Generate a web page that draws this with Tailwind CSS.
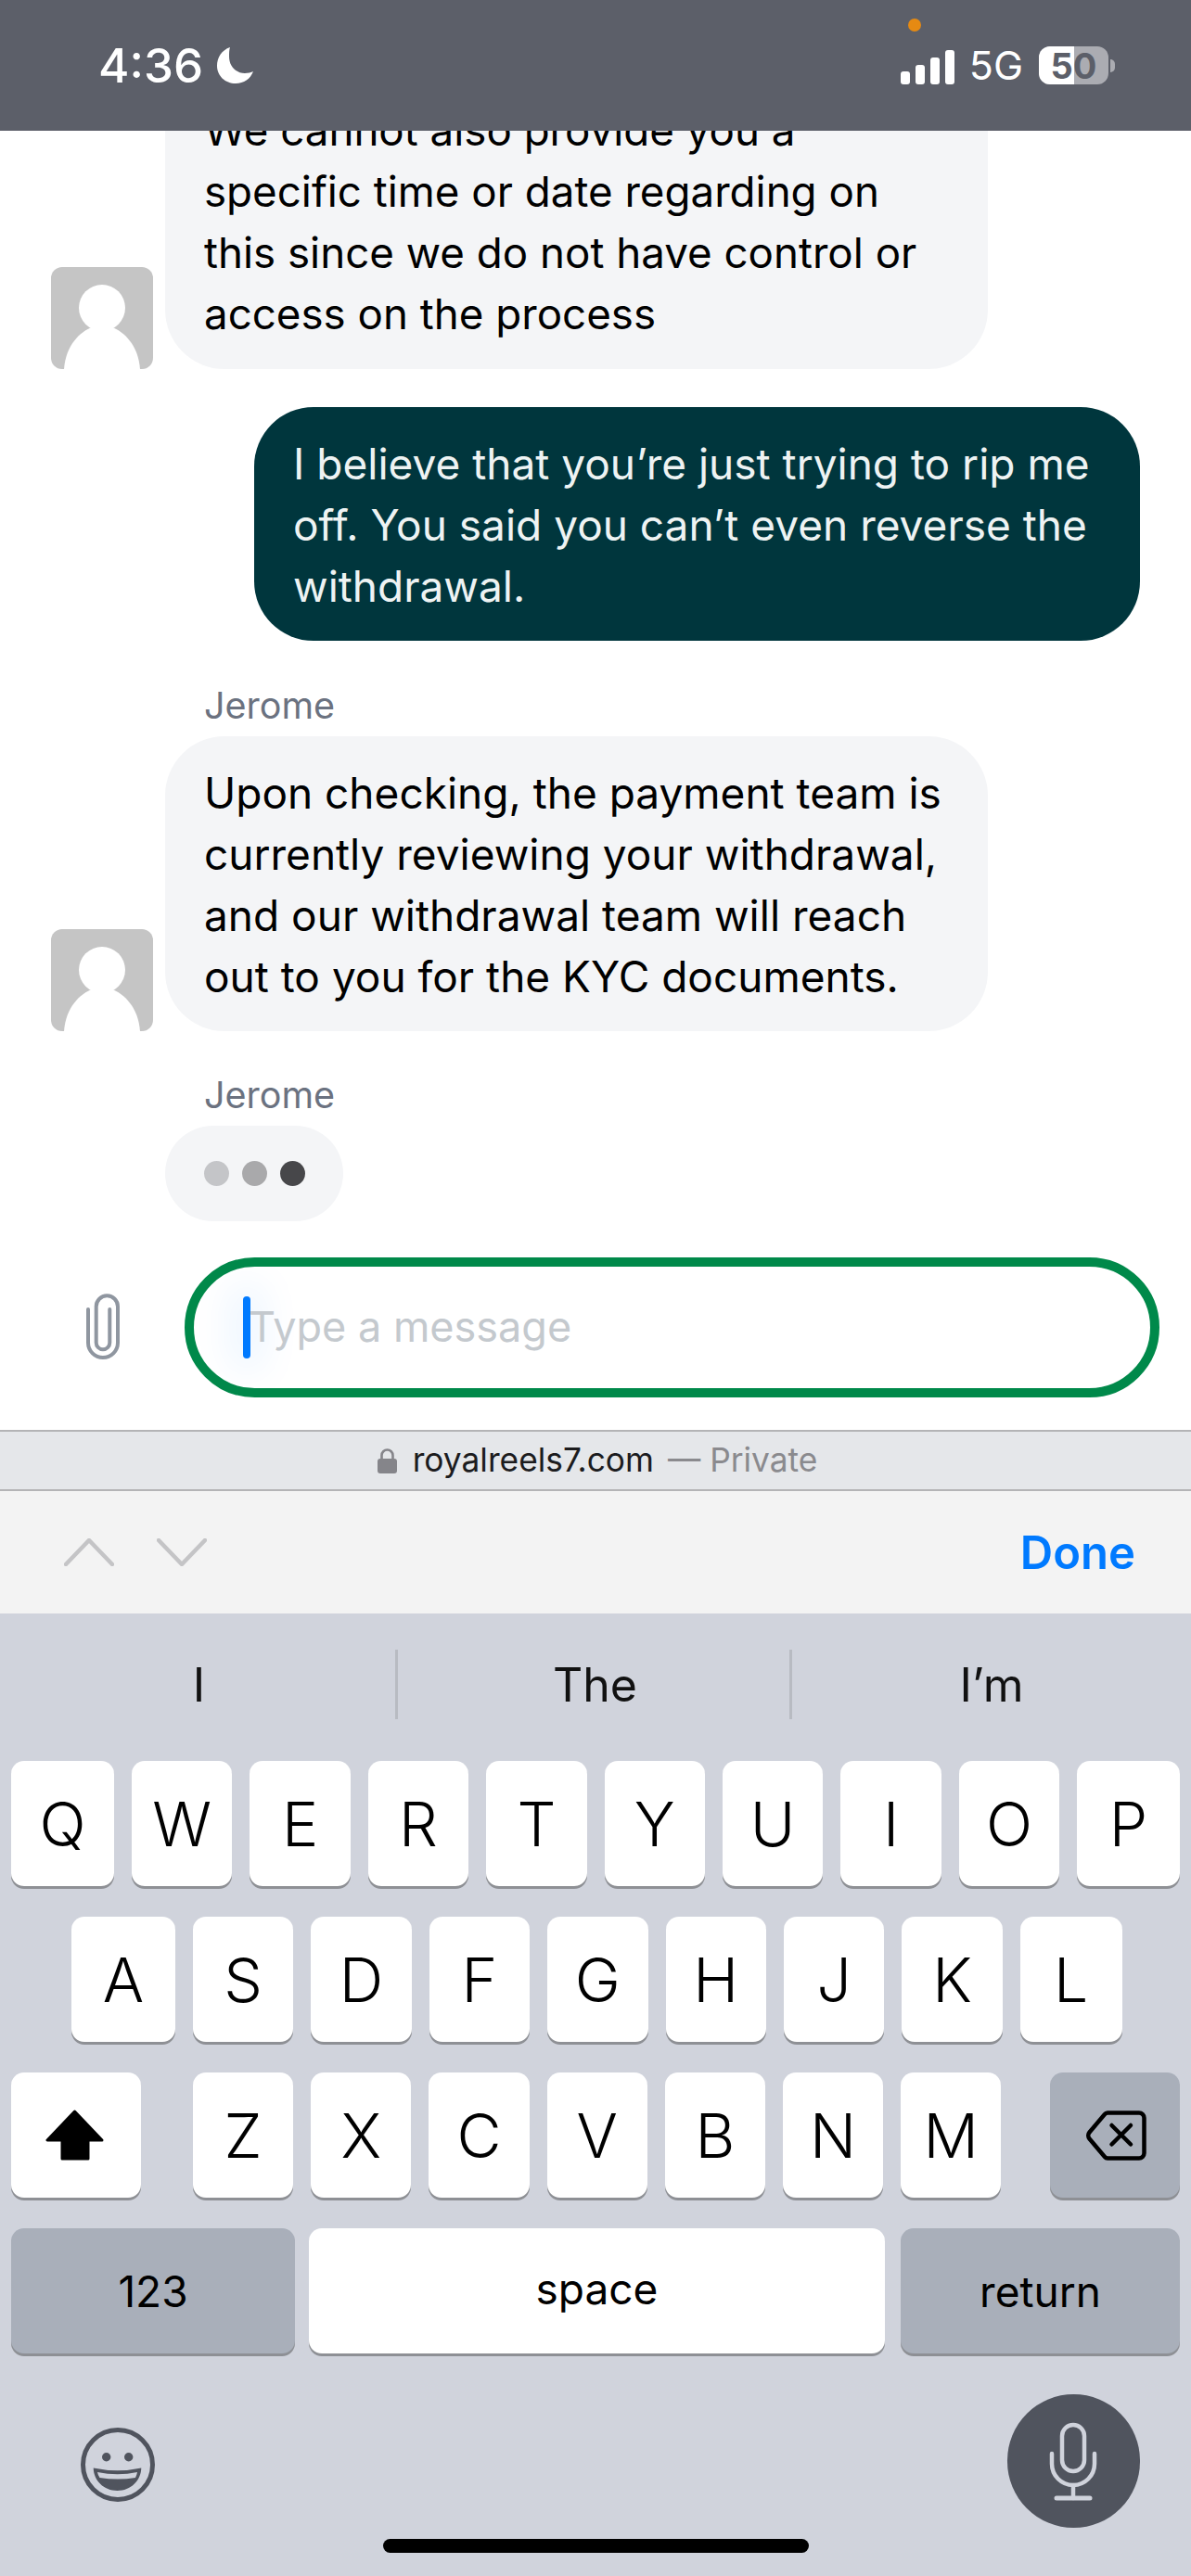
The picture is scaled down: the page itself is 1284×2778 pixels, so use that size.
<!DOCTYPE html>
<html lang="en">
<head>
    <meta charset="UTF-8">
    <meta name="viewport" content="width=device-width, initial-scale=1.0">
    <title>Chat</title>
    <script src="https://cdn.jsdelivr.net/npm/@tailwindcss/browser@4"></script>
</head>
<body class="bg-white font-['Inter',sans-serif]">
    <div class="w-[1284px] h-[2778px] flex flex-col overflow-hidden">
        <!-- status bar -->
        <div class="relative z-10 h-[141px] shrink-0 bg-[#5c5f69] flex items-center justify-between pl-[106px] pr-[82px] text-white">
            <div class="flex items-center gap-[15px]">
                <span class="text-[51px] leading-none font-medium">4:36</span>
                <svg width="39" height="39" viewBox="0 0 39 39" fill="#fff"><path d="M14 0C5 3 0 11 0 20C0 31 9 39 20 39C29 39 36 34 39 26C37 27 33 28 30 28C20 28 13 20 13 10C13 6 13 3 14 0Z"/></svg>
            </div>
            <div class="flex items-center">
                <div class="flex items-end gap-[6px] h-[37px] mt-[4px]">
                    <div class="w-[10px] h-[14px] bg-white rounded-[3px]"></div>
                    <div class="w-[10px] h-[21px] bg-white rounded-[3px]"></div>
                    <div class="w-[10px] h-[29px] bg-white rounded-[3px]"></div>
                    <div class="w-[10px] h-[37px] bg-white rounded-[3px]"></div>
                </div>
                <span class="ml-[16px] text-[43px] leading-none">5G</span>
                <div class="relative ml-[17px] w-[75px] h-[41px] rounded-[12px] bg-[#abacb2] flex">
                    <div class="w-[38px] h-full bg-white rounded-l-[12px]"></div>
                    <span class="absolute inset-0 flex items-center justify-center text-[38px] leading-none font-bold text-[#5c5f69]">50</span>
                </div>
                <div class="ml-[2px] w-[5px] h-[14px] bg-[#abacb2] rounded-r-full"></div>
            </div>
            <div class="absolute left-[979px] top-[20px] w-[14px] h-[14px] rounded-full bg-[#e68a12]"></div>
        </div>

        <!-- chat -->
        <div class="h-[1401px] shrink-0 overflow-hidden flex flex-col text-[46px] leading-[66px] text-black">
            <div class="flex items-end -mt-[61px] ml-[55px] gap-[13px]">
                <svg class="shrink-0" width="110" height="110" viewBox="0 0 110 110"><rect width="110" height="110" rx="12" fill="#c5c5c5"/><circle cx="55" cy="44" r="25" fill="#fff"/><path d="M14 110C16 85 30 70 46 64L64 64C80 70 94 85 96 110Z" fill="#fff"/></svg>
                <div class="w-[887px] bg-[#f4f5f7] rounded-[64px] px-[42px] pt-[28px] pb-[26px] text-[45.7px]">We cannot also provide you a<br>specific time or date regarding on<br>this since we do not have control or<br>access on the process</div>
            </div>
            <div class="mt-[41px] ml-[274px] w-[955px] bg-[#00363d] text-[#eef3f3] rounded-[64px] px-[42px] pt-[28px] pb-[26px]">I believe that you’re just trying to rip me<br>off. You said you can’t even reverse the<br>withdrawal.</div>
            <div class="mt-[47px] ml-[220px] mb-[10px] text-[39.5px] leading-[46px] text-[#6b7280]">Jerome</div>
            <div class="flex items-end ml-[55px] gap-[13px]">
                <svg class="shrink-0" width="110" height="110" viewBox="0 0 110 110"><rect width="110" height="110" rx="12" fill="#c5c5c5"/><circle cx="55" cy="44" r="25" fill="#fff"/><path d="M14 110C16 85 30 70 46 64L64 64C80 70 94 85 96 110Z" fill="#fff"/></svg>
                <div class="w-[887px] bg-[#f4f5f7] rounded-[64px] px-[42px] pt-[28px] pb-[26px]">Upon checking, the payment team is<br>currently reviewing your withdrawal,<br>and our withdrawal team will reach<br>out to you for the KYC documents.</div>
            </div>
            <div class="mt-[46px] ml-[220px] mb-[10px] text-[39.5px] leading-[46px] text-[#6b7280]">Jerome</div>
            <div class="ml-[178px] w-[192px] h-[103px] bg-[#f4f5f7] rounded-[52px] pl-[42px] flex items-center gap-[14px]">
                <div class="w-[27px] h-[27px] rounded-full bg-[#c4c5c8]"></div>
                <div class="w-[27px] h-[27px] rounded-full bg-[#a9a9ab]"></div>
                <div class="w-[27px] h-[27px] rounded-full bg-[#47474a]"></div>
            </div>
            <div class="mt-[39px] flex items-center">
                <svg class="ml-[93px] shrink-0" width="36" height="73" viewBox="0 0 36 73" fill="none" stroke="#8f96a0" stroke-width="4" stroke-linecap="round"><path d="M2 17V53A16 16 0 0 0 34 53V14A11.65 11.65 0 0 0 10.7 14V53A7.3 7.3 0 0 0 25.3 53V17"/></svg>
                <div class="ml-[70px] w-[1051px] h-[151px] rounded-full border-[10px] border-[#00894a] flex items-center pl-[53px] text-[45px] text-[#c4c9ce]">
                    <div class="w-[8px] h-[67px] rounded-full bg-[#007aff] shadow-[0_0_40px_14px_rgba(0,122,255,0.08)]"></div>
                    <span class="-ml-[2px] -mt-[2px]">Type a message</span>
                </div>
            </div>
        </div>

        <!-- address bar -->
        <div class="h-[66px] shrink-0 bg-[#e5e7ea] border-y-2 border-[#b4b4b6] flex items-center justify-center pl-[4px] text-[35.3px] leading-none">
            <svg width="21" height="27" viewBox="0 0 21 27" fill="#85858a"><rect y="11" width="21" height="16" rx="3"/><path d="M4.5 12V7.5a6 6 0 0 1 12 0V12" fill="none" stroke="#85858a" stroke-width="2.6"/></svg>
            <span class="ml-[17px] text-[#1c1c1e]">royalreels7.com</span>
            <span class="ml-[15px] text-[#8a8a8e]">— Private</span>
        </div>

        <!-- toolbar -->
        <div class="h-[132px] shrink-0 bg-[#f3f3f3] flex items-center pl-[69px] pr-[60px]">
            <svg width="54" height="30" viewBox="0 0 54 30" fill="none" stroke="#c4c4c6" stroke-width="4.5" stroke-linecap="round" stroke-linejoin="round"><path d="M2 28L27 2L52 28"/></svg>
            <svg class="ml-[46px]" width="54" height="30" viewBox="0 0 54 30" fill="none" stroke="#c4c4c6" stroke-width="4.5" stroke-linecap="round" stroke-linejoin="round"><path d="M2 2L27 28L52 2"/></svg>
            <span class="ml-auto text-[49px] leading-none font-semibold text-[#007aff]">Done</span>
        </div>

        <!-- keyboard -->
        <div class="flex-1 bg-[#d0d3dc] flex flex-col text-black">
            <div class="h-[159px] shrink-0 pt-[39px]">
                <div class="h-[75px] flex text-[50px] leading-none text-[#111]">
                    <div class="w-[426px] flex items-center justify-center pl-[3px]">I</div>
                    <div class="w-[428px] border-x-[3px] border-[#b8bbc2] flex items-center justify-center pl-[3px]">The</div>
                    <div class="w-[430px] flex items-center justify-center">I’m</div>
                </div>
            </div>
            <div class="flex flex-col gap-[33px] text-[66px] leading-none font-[350]">
                <div class="flex pl-[12px] pr-[12px] gap-[19px]">
                    <div class="w-[111px] h-[135px] bg-white rounded-[14px] shadow-[0_3px_0_#8e9095] flex items-center justify-center">Q</div>
                    <div class="w-[108.4px] h-[135px] bg-white rounded-[14px] shadow-[0_3px_0_#8e9095] flex items-center justify-center">W</div>
                    <div class="w-[108.4px] h-[135px] bg-white rounded-[14px] shadow-[0_3px_0_#8e9095] flex items-center justify-center">E</div>
                    <div class="w-[108.4px] h-[135px] bg-white rounded-[14px] shadow-[0_3px_0_#8e9095] flex items-center justify-center">R</div>
                    <div class="w-[108.4px] h-[135px] bg-white rounded-[14px] shadow-[0_3px_0_#8e9095] flex items-center justify-center">T</div>
                    <div class="w-[108.4px] h-[135px] bg-white rounded-[14px] shadow-[0_3px_0_#8e9095] flex items-center justify-center">Y</div>
                    <div class="w-[108.4px] h-[135px] bg-white rounded-[14px] shadow-[0_3px_0_#8e9095] flex items-center justify-center">U</div>
                    <div class="w-[108.4px] h-[135px] bg-white rounded-[14px] shadow-[0_3px_0_#8e9095] flex items-center justify-center">I</div>
                    <div class="w-[108.4px] h-[135px] bg-white rounded-[14px] shadow-[0_3px_0_#8e9095] flex items-center justify-center">O</div>
                    <div class="flex-1 h-[135px] bg-white rounded-[14px] shadow-[0_3px_0_#8e9095] flex items-center justify-center">P</div>
                </div>
                <div class="flex pl-[77px] gap-[19px]">
                    <div class="w-[112px] h-[135px] bg-white rounded-[14px] shadow-[0_3px_0_#8e9095] flex items-center justify-center">A</div>
                    <div class="w-[108.4px] h-[135px] bg-white rounded-[14px] shadow-[0_3px_0_#8e9095] flex items-center justify-center">S</div>
                    <div class="w-[108.4px] h-[135px] bg-white rounded-[14px] shadow-[0_3px_0_#8e9095] flex items-center justify-center">D</div>
                    <div class="w-[108.4px] h-[135px] bg-white rounded-[14px] shadow-[0_3px_0_#8e9095] flex items-center justify-center">F</div>
                    <div class="w-[108.4px] h-[135px] bg-white rounded-[14px] shadow-[0_3px_0_#8e9095] flex items-center justify-center">G</div>
                    <div class="w-[108.4px] h-[135px] bg-white rounded-[14px] shadow-[0_3px_0_#8e9095] flex items-center justify-center">H</div>
                    <div class="w-[108.4px] h-[135px] bg-white rounded-[14px] shadow-[0_3px_0_#8e9095] flex items-center justify-center">J</div>
                    <div class="w-[108.4px] h-[135px] bg-white rounded-[14px] shadow-[0_3px_0_#8e9095] flex items-center justify-center">K</div>
                    <div class="w-[110px] h-[135px] bg-white rounded-[14px] shadow-[0_3px_0_#8e9095] flex items-center justify-center">L</div>
                </div>
                <div class="flex pl-[12px] pr-[12px]">
                    <div class="w-[140px] h-[135px] bg-white rounded-[14px] shadow-[0_3px_0_#8e9095] flex items-center justify-center pr-[3px]">
                        <svg width="63" height="55" viewBox="0 0 63 55" fill="#000" stroke="#000" stroke-width="3" stroke-linejoin="round"><path d="M31.5 2L2 33H18V53H46V33H61Z"/></svg>
                    </div>
                    <div class="ml-[56px] flex gap-[19px]">
                        <div class="w-[108.2px] h-[135px] bg-white rounded-[14px] shadow-[0_3px_0_#8e9095] flex items-center justify-center">Z</div>
                        <div class="w-[108.2px] h-[135px] bg-white rounded-[14px] shadow-[0_3px_0_#8e9095] flex items-center justify-center">X</div>
                        <div class="w-[108.2px] h-[135px] bg-white rounded-[14px] shadow-[0_3px_0_#8e9095] flex items-center justify-center">C</div>
                        <div class="w-[108.2px] h-[135px] bg-white rounded-[14px] shadow-[0_3px_0_#8e9095] flex items-center justify-center">V</div>
                        <div class="w-[108.2px] h-[135px] bg-white rounded-[14px] shadow-[0_3px_0_#8e9095] flex items-center justify-center">B</div>
                        <div class="w-[108.2px] h-[135px] bg-white rounded-[14px] shadow-[0_3px_0_#8e9095] flex items-center justify-center">N</div>
                        <div class="w-[108.2px] h-[135px] bg-white rounded-[14px] shadow-[0_3px_0_#8e9095] flex items-center justify-center">M</div>
                    </div>
                    <div class="ml-auto w-[140px] h-[135px] bg-[#a9afba] rounded-[14px] shadow-[0_3px_0_#8e9095] flex items-center justify-center pl-[2px]">
                        <svg width="65" height="54" viewBox="0 0 65 54" fill="none" stroke="#000" stroke-width="4.5" stroke-linecap="round" stroke-linejoin="round"><path d="M23 2.5H57A5.5 5.5 0 0 1 62.5 8V46A5.5 5.5 0 0 1 57 51.5H23A4 4 0 0 1 20 50L3.5 30.5A5.5 5.5 0 0 1 3.5 23.5L20 4A4 4 0 0 1 23 2.5Z"/><path d="M27.5 16L48 36.5M48 16L27.5 36.5"/></svg>
                    </div>
                </div>
                <div class="flex pl-[12px] text-[46px] font-normal">
                    <div class="w-[306px] h-[135px] bg-[#a9afba] rounded-[14px] shadow-[0_3px_0_#8e9095] flex items-center justify-center">123</div>
                    <div class="ml-[15px] w-[621px] h-[135px] bg-white rounded-[14px] shadow-[0_3px_0_#8e9095] flex items-center justify-center pb-[6px]">space</div>
                    <div class="ml-[17px] w-[301px] h-[135px] bg-[#a9afba] rounded-[14px] shadow-[0_3px_0_#8e9095] flex items-center justify-center">return</div>
                </div>
            </div>
            <div class="mt-[44px] flex items-center pl-[87px] pr-[55px] justify-between">
                <svg class="mt-[8px]" width="80" height="80" viewBox="0 0 80 80"><circle cx="40" cy="40" r="37.5" fill="none" stroke="#50545e" stroke-width="5"/><circle cx="27.7" cy="31.7" r="4.7" fill="#50545e"/><circle cx="51.7" cy="31.7" r="4.7" fill="#50545e"/><path d="M13.7 43.5Q40 49 65.3 43.5C65 57 54 68 39.5 68C25 68 14 57 13.7 43.5Z" fill="#50545e"/><path d="M18 48Q40 52.5 61 48Q60.5 51 59 54Q40 57 20.5 54Q18.5 51 18 48Z" fill="#d0d3dc"/></svg>
                <div class="w-[143px] h-[144px] rounded-full bg-[#50545e]">
                    <svg width="143" height="144" viewBox="0 0 143 144" fill="none" stroke="#d0d3dc" stroke-width="4.5" stroke-linecap="round"><rect x="59" y="33" width="24" height="50" rx="12"/><path d="M48 64V75A23 23 0 0 0 94 75V64"/><path d="M71 98V112"/><path d="M53 112H89" stroke-width="5"/></svg>
                </div>
            </div>
            <div class="mt-[12px] ml-[413px] w-[459px] h-[15px] rounded-full bg-black"></div>
        </div>
    </div>
</body>
</html>
